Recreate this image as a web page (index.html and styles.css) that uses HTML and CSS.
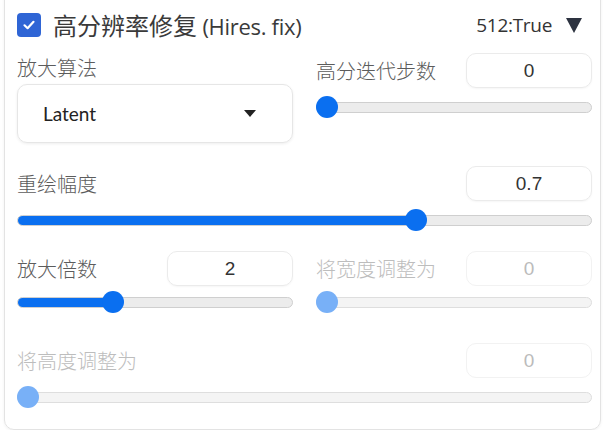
FILE: index.html
```html
<!DOCTYPE html>
<html lang="zh-CN">
<head>
<meta charset="utf-8">
<link rel="stylesheet" href="styles.css">
</head>
<body>
<div class="card">
  <div class="head">
    <div class="check">
      <span class="box"><svg width="16" height="16" viewBox="0 0 16 16"><path d="M3.5 8.3 L6.6 11.2 L12.5 4.8" fill="none" stroke="#fff" stroke-width="2.2" stroke-linecap="round" stroke-linejoin="round"/></svg></span>
      <span class="title">高分辨率修复 <span class="latin">(Hires. fix)</span></span>
    </div>
    <div class="meta">
      <span class="tag">512:True</span>
      <svg class="tri" width="16" height="16" viewBox="0 0 16 16"><polygon points="0,1 16,1 8,16" fill="#2d3340"/></svg>
    </div>
  </div>

  <div class="row two r1">
    <div class="col">
      <div class="label top">放大算法</div>
      <div class="select"><span>Latent</span><svg width="12" height="7" viewBox="0 0 12 7"><polygon points="0,0 12,0 6,7" fill="#222"/></svg></div>
    </div>
    <div class="col">
      <div class="fhead"><span class="label">高分迭代步数</span><span class="num">0</span></div>
      <div class="slider"><div class="track"><div class="fill" style="width:0%"></div></div><div class="thumb" style="left:0%"></div></div>
    </div>
  </div>

  <div class="row r2">
    <div class="fhead"><span class="label">重绘幅度</span><span class="num">0.7</span></div>
    <div class="slider"><div class="track"><div class="fill" style="width:70%"></div></div><div class="thumb" style="left:calc(70% - 15px)"></div></div>
  </div>

  <div class="row two r3">
    <div class="col">
      <div class="fhead"><span class="label">放大倍数</span><span class="num">2</span></div>
      <div class="slider tight"><div class="track"><div class="fill" style="width:33.3%"></div></div><div class="thumb" style="left:calc(33.3% - 7px)"></div></div>
    </div>
    <div class="col disabled">
      <div class="fhead"><span class="label">将宽度调整为</span><span class="num">0</span></div>
      <div class="slider tight"><div class="track"><div class="fill" style="width:0%"></div></div><div class="thumb" style="left:0%"></div></div>
    </div>
  </div>

  <div class="row r4 disabled">
    <div class="fhead"><span class="label">将高度调整为</span><span class="num">0</span></div>
    <div class="slider"><div class="track"><div class="fill" style="width:0%"></div></div><div class="thumb" style="left:0%"></div></div>
  </div>
</div>
</body>
</html>
```

FILE: styles.css
```css
html, body {
  margin: 0;
  padding: 0;
  background: #fff;
}
body {
  font-family: "Noto Sans", "Noto Sans CJK SC", sans-serif;
  color: #333;
}
.card {
  margin: -12px 5px 0 4px;
  border: 1px solid #e3e3e3;
  border-radius: 10px;
  padding: 11px 8px 21px 12px;
  box-shadow: 0 1px 3px rgba(0,0,0,0.06);
}
.head {
  height: 50px;
  display: flex;
  align-items: center;
  justify-content: space-between;
}
.check {
  display: flex;
  align-items: center;
  gap: 12px;
}
.box {
  width: 24px;
  height: 24px;
  border-radius: 4px;
  background: #2f65d5;
  display: flex;
  align-items: center;
  justify-content: center;
}
.title {
  font-family: "Noto Sans CJK SC", sans-serif;
  font-size: 24px;
  color: #3a3a3a;
  line-height: 30px;
}
.title .latin {
  font-family: "Open Sans", "Noto Sans", sans-serif;
  font-size: 22px;
  letter-spacing: -0.3px;
}
.meta {
  display: flex;
  align-items: center;
  gap: 14px;
  padding-right: 10px;
}
.tag {
  font-family: "Open Sans", sans-serif;
  font-size: 19px;
  letter-spacing: -0.3px;
  color: #333;
}
.tri { display: block; }

.row { margin-top: 23px; }
.row.r1 { margin-top: 3px; }
.row.r3 { margin-top: 20px; }
.row.r4 { margin-top: 30px; }
.two {
  display: grid;
  grid-template-columns: 1fr 1fr;
  column-gap: 23px;
}
.label {
  font-family: "Noto Sans CJK SC", sans-serif;
  font-weight: 300;
  font-size: 20px;
  color: #5c5c5c;
  line-height: 30px;
}
.label.top { margin-bottom: 1px; }
.fhead {
  display: flex;
  align-items: center;
  justify-content: space-between;
  height: 35px;
}
.num {
  width: 124px;
  height: 33px;
  box-sizing: content-box;
  border: 1px solid #ebebeb;
  border-radius: 10px;
  display: flex;
  align-items: center;
  justify-content: center;
  font-family: "Liberation Sans", Arial, sans-serif;
  font-size: 19px;
  color: #333;
  box-shadow: 0 1px 2px rgba(0,0,0,0.04);
}
.select {
  height: 57px;
  border: 1px solid #e6e6e6;
  border-radius: 10px;
  box-shadow: 0 1px 3px rgba(0,0,0,0.07);
  display: flex;
  align-items: center;
  justify-content: space-between;
  padding: 0 36px 0 25px;
  font-family: "Lato", "Open Sans", sans-serif;
  font-size: 19px;
  color: #222;
}
.slider {
  position: relative;
  height: 22px;
  margin-top: 8px;
}
.slider.tight { margin-top: 5px; }
.track {
  position: absolute;
  left: 0;
  right: 0;
  top: 6px;
  height: 9px;
  border: 1px solid #cfcfcf;
  border-radius: 6px;
  background: #ececec;
  overflow: hidden;
  box-sizing: content-box;
}
.fill {
  height: 100%;
  background: #0a6ff0;
}
.thumb {
  position: absolute;
  top: 0;
  width: 22px;
  height: 22px;
  border-radius: 50%;
  background: #0a6ff0;
}
.disabled .label { color: #bdbdbd; }
.disabled .num { color: #bbb; border-color: #f2f2f2; box-shadow: none; }
.disabled .track { background: #f4f4f4; border-color: #dedede; }
.disabled .fill, .disabled .thumb { background: #78b0f7; }
```
